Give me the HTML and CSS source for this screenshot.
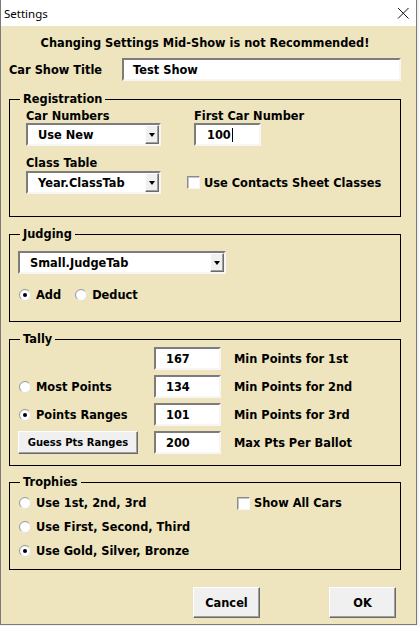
FILE: index.html
```html
<!DOCTYPE html>
<html>
<head>
<meta charset="utf-8">
<title>Settings</title>
<link rel="stylesheet" href="styles.css">
</head>
<body>
<div class="window">
  <div class="titlebar">
    <span class="title">Settings</span>
    <svg class="close" width="12" height="12" viewBox="0 0 12 12"><path d="M1 1L11.5 11.5M11.5 1L1 11.5" stroke="#111" stroke-width="1" fill="none"/></svg>
  </div>
  <div class="form">
    <div class="heading">Changing Settings Mid-Show is not Recommended!</div>
    <div class="title-row">
      <span class="title-lbl">Car Show Title</span>
      <div class="textbox show-title">Test Show</div>
    </div>

    <div class="group reg">
      <div class="legend">Registration</div>
      <div class="reg-grid">
        <span class="lbl">Car Numbers</span>
        <span class="lbl">First Car Number</span>
        <div class="combo w135"><span class="val">Use New</span><span class="drop"><i></i></span></div>
        <div class="textbox num">100<span class="caret"></span></div>
        <span class="lbl low">Class Table</span>
        <span></span>
        <div class="combo w135"><span class="val">Year.ClassTab</span><span class="drop"><i></i></span></div>
        <div class="check shift"><span class="box"></span>Use Contacts Sheet Classes</div>
      </div>
    </div>

    <div class="group judging">
      <div class="legend">Judging</div>
      <div class="judge-body">
        <div class="combo w208"><span class="val">Small.JudgeTab</span><span class="drop"><i></i></span></div>
        <div class="radio-row">
          <div class="opt"><svg class="radio" width="12" height="12" viewBox="0 0 12 12"><circle cx="6" cy="6" r="5.5" fill="#fff" stroke="#e2e2e2"/><path d="M2.1 9.9A5.5 5.5 0 0 1 9.9 2.1" fill="none" stroke="#9a9a9a"/><circle cx="6" cy="6" r="2" fill="#000"/></svg>Add</div>
          <div class="opt"><svg class="radio" width="12" height="12" viewBox="0 0 12 12"><circle cx="6" cy="6" r="5.5" fill="#fff" stroke="#e2e2e2"/><path d="M2.1 9.9A5.5 5.5 0 0 1 9.9 2.1" fill="none" stroke="#9a9a9a"/></svg>Deduct</div>
        </div>
      </div>
    </div>

    <div class="group tally">
      <div class="legend">Tally</div>
      <div class="tally-grid">
        <span></span>
        <div class="textbox pts">167</div>
        <span class="plbl">Min Points for 1st</span>

        <div class="opt"><svg class="radio" width="12" height="12" viewBox="0 0 12 12"><circle cx="6" cy="6" r="5.5" fill="#fff" stroke="#e2e2e2"/><path d="M2.1 9.9A5.5 5.5 0 0 1 9.9 2.1" fill="none" stroke="#9a9a9a"/></svg>Most Points</div>
        <div class="textbox pts">134</div>
        <span class="plbl">Min Points for 2nd</span>

        <div class="opt"><svg class="radio" width="12" height="12" viewBox="0 0 12 12"><circle cx="6" cy="6" r="5.5" fill="#fff" stroke="#e2e2e2"/><path d="M2.1 9.9A5.5 5.5 0 0 1 9.9 2.1" fill="none" stroke="#9a9a9a"/><circle cx="6" cy="6" r="2" fill="#000"/></svg>Points Ranges</div>
        <div class="textbox pts">101</div>
        <span class="plbl">Min Points for 3rd</span>

        <div class="btn guess">Guess Pts Ranges</div>
        <div class="textbox pts">200</div>
        <span class="plbl">Max Pts Per Ballot</span>
      </div>
    </div>

    <div class="group trophies">
      <div class="legend">Trophies</div>
      <div class="trophy-grid">
        <div class="opt"><svg class="radio" width="12" height="12" viewBox="0 0 12 12"><circle cx="6" cy="6" r="5.5" fill="#fff" stroke="#e2e2e2"/><path d="M2.1 9.9A5.5 5.5 0 0 1 9.9 2.1" fill="none" stroke="#9a9a9a"/></svg>Use 1st, 2nd, 3rd</div>
        <div class="check"><span class="box"></span>Show All Cars</div>
        <div class="opt"><svg class="radio" width="12" height="12" viewBox="0 0 12 12"><circle cx="6" cy="6" r="5.5" fill="#fff" stroke="#e2e2e2"/><path d="M2.1 9.9A5.5 5.5 0 0 1 9.9 2.1" fill="none" stroke="#9a9a9a"/></svg>Use First, Second, Third</div>
        <span></span>
        <div class="opt"><svg class="radio" width="12" height="12" viewBox="0 0 12 12"><circle cx="6" cy="6" r="5.5" fill="#fff" stroke="#e2e2e2"/><path d="M2.1 9.9A5.5 5.5 0 0 1 9.9 2.1" fill="none" stroke="#9a9a9a"/><circle cx="6" cy="6" r="2" fill="#000"/></svg>Use Gold, Silver, Bronze</div>
        <span></span>
      </div>
    </div>

    <div class="buttons">
      <div class="btn action">Cancel</div>
      <div class="btn action">OK</div>
    </div>
  </div>
</div>
</body>
</html>
```

FILE: styles.css
```css
* { box-sizing: border-box; }

body {
  margin: 0;
  background: #f2f2f2;
  font-family: "DejaVu Sans", sans-serif;
  font-weight: bold;
  font-size: 11.4px;
  color: #000;
}

.window {
  width: 417px;
  height: 625px;
  border: 1px solid #7a7a7a;
  border-top: none;
  background: #eee5be;
  display: flex;
  flex-direction: column;
}

.titlebar {
  height: 26px;
  flex: none;
  background: #fff;
  display: flex;
  align-items: center;
  justify-content: space-between;
  padding: 0 7px 0 3px;
  font-family: "Noto Sans", sans-serif;
  font-weight: normal;
  font-size: 11.5px;
}

.close { display: block; }

.form {
  flex: 1;
  padding: 9px 15px 0 8px;
}

.heading {
  text-align: center;
  line-height: 16px;
  height: 16px;
}

.title-row {
  display: flex;
  align-items: center;
  margin-top: 7px;
}

.title-lbl { width: 113px; }

.textbox {
  height: 23px;
  background: #fff;
  border: 2px solid;
  border-color: #7c7c7c #f6f6f6 #f6f6f6 #7c7c7c;
  padding-left: 9px;
  display: flex;
  align-items: center;
}

.show-title { width: 279px; }

.num { width: 67px; padding-left: 11px; }

.caret {
  width: 1px;
  height: 14px;
  background: #000;
  margin-left: 1px;
}

.group {
  border: 1px solid #000;
  margin-top: 17px;
}

.group.reg { margin-top: 18px; }
.group.trophies { margin-top: 16px; }

.legend {
  margin: -8px 0 0 10px;
  padding: 0 3px;
  background: #eee5be;
  width: max-content;
  line-height: 15px;
  height: 15px;
}

.lbl { line-height: 16px; padding-top: 1px; }
.lbl.low { align-self: end; line-height: 15px; padding-top: 0; }

/* Registration */
.reg { height: 118px; }

.reg-grid {
  display: grid;
  grid-template-columns: 168px auto;
  grid-template-rows: 16px 23px 25px 23px;
  padding-left: 16px;
}

.combo {
  height: 23px;
  background: #fff;
  border: 2px solid;
  border-color: #7c7c7c #f6f6f6 #f6f6f6 #7c7c7c;
  display: flex;
  align-items: center;
}

.combo .val {
  flex: 1;
  padding-left: 10px;
}

.drop {
  width: 14px;
  height: 19px;
  background: #f0f0f0;
  border: 1px solid;
  border-color: #fff #6a6a6a #6a6a6a #fff;
  box-shadow: inset -1px -1px #a0a0a0;
  display: flex;
  align-items: center;
  justify-content: center;
}

.drop i {
  width: 0;
  height: 0;
  border-left: 3.5px solid transparent;
  border-right: 3.5px solid transparent;
  border-top: 4px solid #000;
  margin-top: 1px;
}

.w135 { width: 135px; }
.w208 { width: 208px; }

.check {
  display: flex;
  align-items: center;
  gap: 4px;
}

.check.shift { margin-left: -7px; }

.box {
  width: 13px;
  height: 13px;
  background: #fff;
  border: 1px solid;
  border-color: #8c8c8c #f6f6f6 #f6f6f6 #8c8c8c;
  box-shadow: inset 1px 1px #c4c4c4;
}

/* Judging */
.judging { height: 88px; }

.judge-body {
  padding-left: 8px;
  padding-top: 9px;
}

.radio-row {
  display: flex;
  gap: 14px;
  margin-top: 13px;
  margin-left: 1px;
  line-height: 16px;
}

.opt {
  display: flex;
  align-items: center;
  gap: 5px;
}

.radio { display: block; flex: none; }

/* Tally */
.tally { height: 127px; }

.tally-grid {
  display: grid;
  grid-template-columns: 136px 67px auto;
  grid-auto-rows: 23px;
  row-gap: 5px;
  padding-left: 8px;
  align-items: center;
}

.tally-grid .opt { margin-left: 1px; padding-top: 1px; }

.pts { padding-left: 10px; }

.plbl { padding-left: 13px; padding-top: 1px; }

.btn {
  background: #f0f0f0;
  border: 1px solid;
  border-color: #fff #6a6a6a #6a6a6a #fff;
  box-shadow: inset -1px -1px #a0a0a0;
  display: flex;
  align-items: center;
  justify-content: center;
}

.guess {
  width: 120px;
  height: 23px;
  font-size: 10px;
}

/* Trophies */
.trophies { height: 88px; }

.trophy-grid {
  display: grid;
  grid-template-columns: 218px auto;
  grid-auto-rows: 24px;
  padding-left: 9px;
  margin-top: 1px;
  align-items: center;
}

/* Buttons */
.buttons {
  display: flex;
  justify-content: flex-end;
  gap: 69px;
  margin-top: 17px;
  padding-right: 5px;
}

.action {
  width: 67px;
  height: 31px;
}
```
